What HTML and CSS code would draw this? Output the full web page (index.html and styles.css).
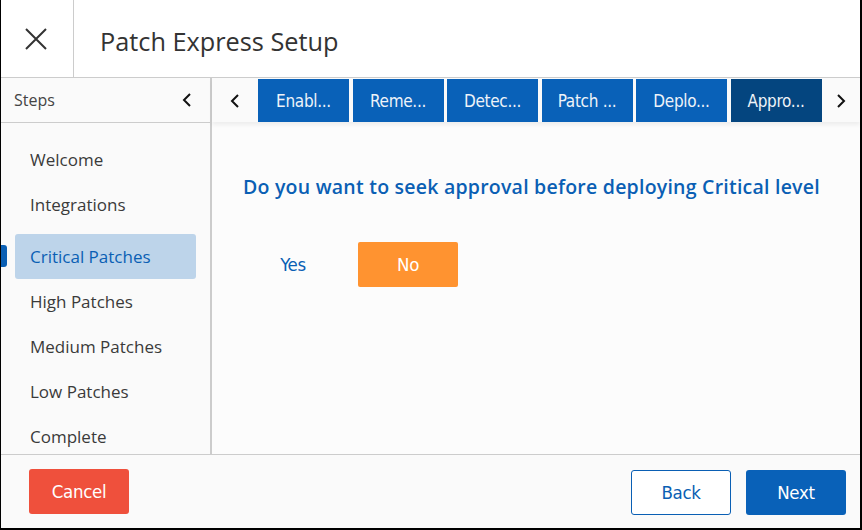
FILE: index.html
```html
<!DOCTYPE html>
<html>
  <head>
    <meta charset="UTF-8" />
    <title>Patch Express Setup</title>
    <link rel="stylesheet" href="styles.css">
  </head>

  <body>
    <div id="frame">
      <div class="header">
        <div class="closeCell">
          <svg width="22" height="22" viewBox="0 0 22 22">
            <path d="M1 1 L21 21 M21 1 L1 21" stroke="#333" stroke-width="2" fill="none" />
          </svg>
        </div>
        <div class="title">Patch Express Setup</div>
      </div>

      <div class="body">
        <div class="sidebar">
          <div class="sidebarHead">
            <span>Steps</span>
            <svg width="10" height="14" viewBox="0 0 10 14">
              <polyline points="8,1 2,7 8,13" stroke="#111" stroke-width="2" fill="none" />
            </svg>
          </div>
          <ul class="steps">
            <li>Welcome</li>
            <li>Integrations</li>
            <li class="active">Critical Patches</li>
            <li>High Patches</li>
            <li>Medium Patches</li>
            <li>Low Patches</li>
            <li>Complete</li>
          </ul>
        </div>

        <div class="main">
          <div class="tabStrip">
            <div class="tabArrow left">
              <svg width="10" height="14" viewBox="0 0 10 14">
                <polyline points="8,1 2,7 8,13" stroke="#111" stroke-width="2" fill="none" />
              </svg>
            </div>
            <div class="tabs">
              <div class="tab">Enabl...</div>
              <div class="tab">Reme...</div>
              <div class="tab">Detec...</div>
              <div class="tab">Patch ...</div>
              <div class="tab">Deplo...</div>
              <div class="tab current">Appro...</div>
            </div>
            <div class="tabArrow right">
              <svg width="10" height="14" viewBox="0 0 10 14">
                <polyline points="2,1 8,7 2,13" stroke="#111" stroke-width="2" fill="none" />
              </svg>
            </div>
          </div>

          <div class="question">
            <h2>Do you want to seek approval before deploying Critical level</h2>
            <div class="choices">
              <button class="choice">Yes</button>
              <button class="choice selected">No</button>
            </div>
          </div>
        </div>
      </div>

      <div class="footer">
        <button class="btn cancel">Cancel</button>
        <div class="navButtons">
          <button class="btn back">Back</button>
          <button class="btn next">Next</button>
        </div>
      </div>
    </div>
  </body>
</html>
```

FILE: styles.css
```css
body {
  margin: 0;
  font-family: "Open Sans", Lato, sans-serif;
  color: #333;
}

#frame {
  width: 862px;
  height: 530px;
  box-sizing: border-box;
  border-left: 1px solid #000;
  border-right: 2px solid #000;
  border-bottom: 2px solid #000;
  background: #fafafa;
  display: flex;
  flex-direction: column;
  overflow: hidden;
}

.header {
  height: 77px;
  flex-shrink: 0;
  border-bottom: 1px solid #ccc;
  display: flex;
  align-items: stretch;
  background: #fff;
}

.closeCell {
  width: 72px;
  border-right: 1px solid #ccc;
  display: flex;
  align-items: center;
  justify-content: center;
}

.closeCell svg {
  margin-left: -2px;
  margin-top: 1px;
}

.title {
  display: flex;
  align-items: center;
  padding-left: 26px;
  padding-top: 5px;
  font-size: 25.3px;
  color: #333;
}

.body {
  flex: 1;
  display: flex;
  min-height: 0;
  border-bottom: 1px solid #ccc;
}

.sidebar {
  width: 209px;
  border-right: 2px solid #ccc;
  display: flex;
  flex-direction: column;
  overflow: hidden;
}

.sidebarHead {
  height: 44px;
  flex-shrink: 0;
  border-bottom: 1px solid #ccc;
  display: flex;
  align-items: center;
  justify-content: space-between;
  padding: 0 18px 0 13px;
  font-size: 16px;
  color: #444;
}

.steps {
  list-style: none;
  margin: 0;
  padding: 14px 14px 0 14px;
}

.steps li {
  position: relative;
  height: 45px;
  line-height: 45px;
  padding-left: 15px;
  font-size: 17px;
  color: #3a3a3a;
  border-radius: 3px;
  white-space: nowrap;
}

.steps li.active {
  margin-top: 7px;
  background: #bdd4ea;
  color: #0a5fb4;
}

.steps li.active:before {
  content: "";
  position: absolute;
  left: -14px;
  top: 11px;
  width: 6px;
  height: 22px;
  background: #0a5fb4;
  border-radius: 0 3px 3px 0;
}

.main {
  flex: 1;
  display: flex;
  flex-direction: column;
  background: #fcfcfc;
}

.tabStrip {
  height: 43px;
  flex-shrink: 0;
  padding-top: 1px;
  display: flex;
  background: #fafafa;
  box-shadow: 0 3px 4px rgba(0, 0, 0, 0.06);
}

.tabArrow {
  display: flex;
  align-items: center;
  justify-content: center;
}

.tabArrow.left {
  width: 46px;
}

.tabArrow.right {
  flex: 1;
}

.tabs {
  display: flex;
  gap: 3.5px;
}

.tab {
  width: 91px;
  background: #0961b8;
  color: #eef3f8;
  font-family: "DejaVu Sans Condensed", "DejaVu Sans", sans-serif;
  font-stretch: condensed;
  font-size: 17px;
  letter-spacing: -0.3px;
  display: flex;
  align-items: center;
  justify-content: center;
}

.tab.current {
  background: #04457f;
}

.question {
  padding: 54px 0 0 31px;
}

.question h2 {
  margin: 0;
  font-size: 19.5px;
  letter-spacing: 0.23px;
  line-height: 22px;
  font-weight: 600;
  color: #0a5fb4;
  white-space: nowrap;
}

.choices {
  display: flex;
  gap: 15px;
  margin-top: 44px;
}

button {
  font-family: "DejaVu Sans Condensed", "DejaVu Sans", sans-serif;
  font-stretch: condensed;
  font-size: 18.5px;
  letter-spacing: -0.3px;
  cursor: pointer;
}

.choice {
  width: 100px;
  height: 45px;
  border: none;
  border-radius: 2px;
  background: transparent;
  color: #0a5fb4;
}

.choice.selected {
  background: #ff9330;
  color: #fff;
}

.footer {
  flex: 0 0 73px;
  display: flex;
  justify-content: space-between;
  align-items: flex-start;
  padding: 14px 14px 0 28px;
  box-sizing: border-box;
  background: #fafafa;
}

.navButtons {
  display: flex;
  gap: 15px;
  margin-top: 1px;
}

.btn {
  width: 100px;
  height: 45px;
  border-radius: 3px;
  border: 1px solid transparent;
  color: #fff;
}

.cancel {
  background: #ef503c;
}

.back {
  background: #fff;
  border-color: #0a5fb4;
  color: #0a5fb4;
}

.next {
  background: #0961b8;
}
```
